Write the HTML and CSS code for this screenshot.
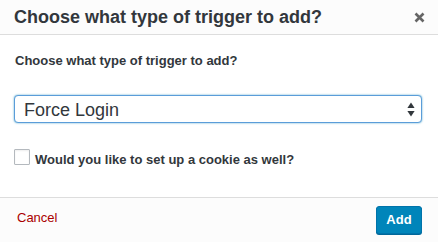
FILE: index.html
```html
<!DOCTYPE html>
<html>
<head>
<meta charset="utf-8">
<link rel="stylesheet" href="styles.css">
</head>
<body>
<div class="modal">
  <div class="modal-header">
    <h1 class="modal-title">Choose what type of trigger to add?</h1>
    <svg class="close" width="11" height="11" viewBox="0 0 11 11"><path d="M1.5 1.5L9.5 9.5M9.5 1.5L1.5 9.5" stroke="#666" stroke-width="2.6" stroke-linecap="butt"/></svg>
  </div>
  <div class="modal-body">
    <p class="field-label">Choose what type of trigger to add?</p>
    <div class="select">
      <span class="select-value">Force Login</span>
      <svg class="select-arrows" width="8" height="15" viewBox="0 0 8 15"><path d="M4 0.5L7.6 6H0.4Z" fill="#32373c"/><path d="M4 14.5L7.6 9H0.4Z" fill="#32373c"/></svg>
    </div>
    <label class="check-row">
      <span class="checkbox"></span>
      <span class="check-label">Would you like to set up a cookie as well?</span>
    </label>
  </div>
  <div class="modal-footer">
    <a class="cancel">Cancel</a>
    <button class="btn-add">Add</button>
  </div>
</div>
</body>
</html>
```
FILE: styles.css
```css
html, body {
  margin: 0;
  padding: 0;
  background: #fff;
}
body {
  width: 438px;
  height: 242px;
  overflow: hidden;
  font-family: "Liberation Sans", Arial, sans-serif;
  color: #23282d;
}
.modal {
  display: flex;
  flex-direction: column;
  height: 242px;
}
.modal-header {
  height: 34px;
  background: #fcfcfc;
  border-bottom: 1px solid #ddd;
  display: flex;
  align-items: center;
  justify-content: space-between;
  padding: 0 13px 0 14px;
}
.modal-title {
  margin: 0;
  font-size: 18px;
  font-weight: bold;
  line-height: 34px;
  color: #32373c;
}
.close {
  display: block;
  margin-top: 0;
}
.modal-body {
  flex: 1;
  padding: 18px 16px 0 14px;
}
.field-label {
  margin: 0 0 0 1px;
  font-size: 13px;
  font-weight: bold;
  line-height: 16px;
  color: #32373c;
}
.select {
  margin-top: 26px;
  height: 28px;
  box-sizing: border-box;
  border: 1px solid #5b9dd9;
  border-radius: 4px;
  box-shadow: 0 0 2px rgba(30, 140, 190, 0.8);
  display: flex;
  align-items: flex-start;
  justify-content: space-between;
  padding: 0 6px 0 9px;
  background: #fff;
}
.select-value {
  font-size: 18px;
  line-height: 28px;
  height: 26px;
  color: #32373c;
}
.select-arrows {
  display: block;
  margin-top: 6px;
}
.check-row {
  display: flex;
  align-items: flex-start;
  margin-top: 26px;
}
.checkbox {
  width: 16px;
  height: 16px;
  box-sizing: border-box;
  border: 1px solid #b4b9be;
  border-radius: 1px;
  background: #fff;
  box-shadow: inset 0 1px 2px rgba(0, 0, 0, 0.07);
}
.check-label {
  margin-left: 5px;
  margin-top: 3px;
  font-size: 13px;
  font-weight: bold;
  line-height: 16px;
  color: #32373c;
}
.modal-footer {
  height: 44px;
  background: #fcfcfc;
  border-top: 1px solid #ddd;
  display: flex;
  align-items: center;
  justify-content: space-between;
  padding: 0 16px 0 17px;
}
.cancel {
  font-size: 13px;
  line-height: 16px;
  color: #a00;
  margin-bottom: 4px;
}
.btn-add {
  height: 28px;
  width: 46px;
  padding: 0;
  box-sizing: border-box;
  background: #0085ba;
  border: 1px solid #0073aa;
  border-radius: 3px;
  box-shadow: 0 1px 0 #006799;
  color: #fff;
  font-family: "Liberation Sans", Arial, sans-serif;
  font-size: 13px;
  font-weight: bold;
  line-height: 26px;
  margin-bottom: 1px;
}
```
